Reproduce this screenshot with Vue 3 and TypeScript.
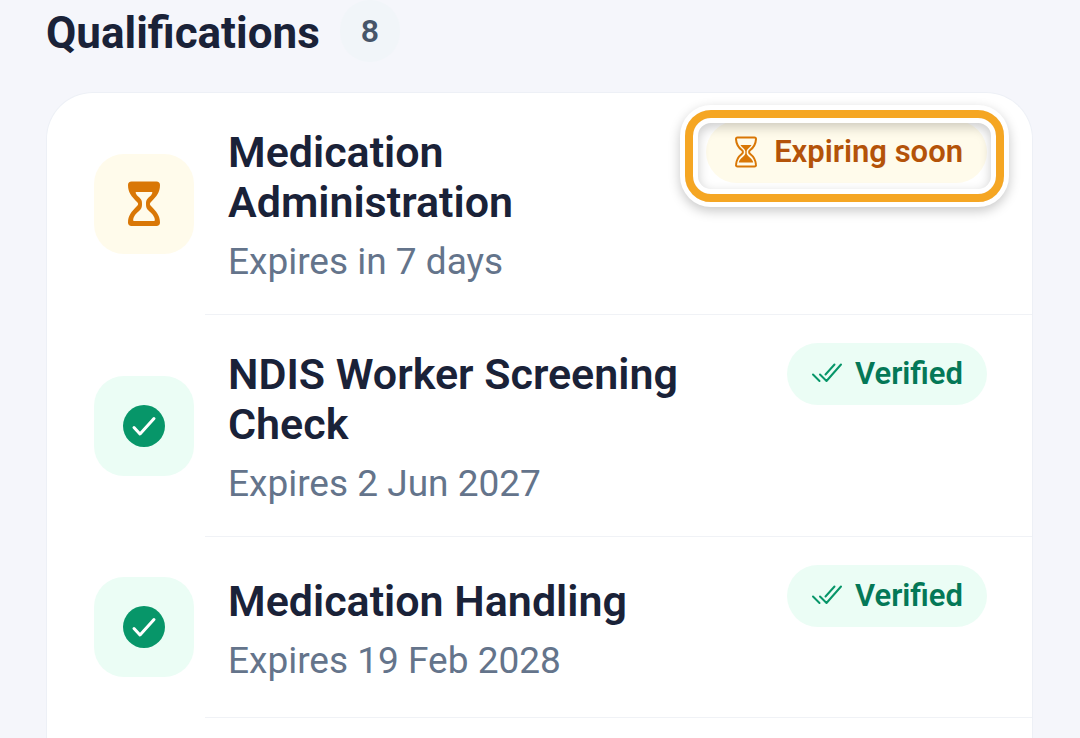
<script setup lang="ts">
type Status = 'expiring' | 'verified'

interface Qualification {
  name: string
  expiry: string
  status: Status
  highlighted?: boolean
}

const total = 8

const labels: Record<Status, string> = {
  expiring: 'Expiring soon',
  verified: 'Verified',
}

const qualifications: Qualification[] = [
  { name: 'Medication Administration', expiry: 'Expires in 7 days', status: 'expiring', highlighted: true },
  { name: 'NDIS Worker Screening Check', expiry: 'Expires 2 Jun 2027', status: 'verified' },
  { name: 'Medication Handling', expiry: 'Expires 19 Feb 2028', status: 'verified' },
]
</script>

<template>
  <main class="page">
    <header class="header">
      <h1 class="heading">Qualifications</h1>
      <span class="count">{{ total }}</span>
    </header>

    <ul class="card">
      <li v-for="item in qualifications" :key="item.name" class="item" :class="item.status">
        <div class="row">
          <div class="tile">
            <svg v-if="item.status === 'expiring'" class="tile-icon" viewBox="0 0 48 48" aria-hidden="true">
              <path
                d="M11.500 1.500h25c2.200 0 3.500 1.500 3.500 3.500 0 7.500-3.600 11.500-9 17-1.500 1.500-1.500 2.500 0 4 5.400 5.500 9 9.500 9 16.500 0 2-1.300 3.500-3.500 3.500h-25c-2.200 0-3.500-1.500-3.500-3.500 0-7 3.600-11 9-16.500 1.500-1.500 1.500-2.500 0-4C11.600 16.500 8 12.500 8 5c0-2 1.300-3.500 3.500-3.500Z"
                fill="currentColor"
              />
              <path
                d="M16.500 12h15c.8 0 1 .6.700 1.200-1.200 3-3.600 3.800-5.100 6.100-.9 1.300-1.100 2.500-1.100 4.700s.2 4 1.500 5.500c2 2.400 5.500 4.300 6.800 8 .8 2.500.8 3.600-.8 3.600h-19c-1.600 0-1.600-1.100-.8-3.600 1.300-3.700 4.800-5.600 6.800-8 1.300-1.500 1.500-3.300 1.500-5.500s-.2-3.400-1.100-4.700c-1.500-2.300-3.900-3.100-5.100-6.100-.3-.6-.1-1.200.7-1.200Z"
                fill="#fffbeb"
              />
            </svg>
            <svg v-else class="tile-icon" viewBox="0 0 48 48" aria-hidden="true">
              <circle cx="24" cy="24" r="21" fill="currentColor" />
              <path
                d="M14 25.500l6 6.500L34 16.500"
                fill="none"
                stroke="#fff"
                stroke-width="3"
                stroke-linecap="round"
                stroke-linejoin="round"
              />
            </svg>
          </div>

          <div class="text">
            <h2 class="name">{{ item.name }}</h2>
            <p class="expiry">{{ item.expiry }}</p>
          </div>

          <div class="status">
            <span class="pill">
              <svg v-if="item.status === 'expiring'" class="pill-icon narrow" viewBox="0 0 24 32" aria-hidden="true">
                <path
                  d="M3.500 1.500h17c1 0 1.600.7 1.500 1.600-.3 5.400-2.300 8.300-6 11.200-1.200.9-1.200 2.500 0 3.400 3.700 2.900 5.700 5.800 6 11.200.1.900-.5 1.600-1.500 1.600h-17c-1 0-1.600-.7-1.500-1.600.3-5.400 2.300-8.300 6-11.200 1.200-.9 1.200-2.500 0-3.400-3.700-2.900-5.700-5.800-6-11.200-.1-.9.500-1.600 1.500-1.600Z"
                  fill="none"
                  stroke="currentColor"
                  stroke-width="2"
                />
                <path
                  d="M6.500 9h11c-.8 2-4.500 3.700-4.800 6.200v2.200c.3 3 5.800 4.600 6.500 9.100H4.800c.7-4.500 6.200-6.100 6.500-9.100v-2.200C11 12.700 7.300 11 6.500 9Z"
                  fill="currentColor"
                />
              </svg>
              <svg v-else class="pill-icon" viewBox="0 0 32 32" aria-hidden="true">
                <path
                  d="M2 16.500l6.500 6.500M9 16.500l6.500 6.500L30 6.500M14.500 16.500L23.500 6.500"
                  fill="none"
                  stroke="currentColor"
                  stroke-width="2"
                  stroke-linecap="round"
                  stroke-linejoin="round"
                />
              </svg>
              {{ labels[item.status] }}
            </span>
            <span v-if="item.highlighted" class="focus-frame" aria-hidden="true"></span>
          </div>
        </div>
      </li>
    </ul>
  </main>
</template>

<style>
html,
body {
  margin: 0;
  background: #f5f6fb;
}
</style>

<style scoped>
.page {
  display: flex;
  flex-direction: column;
  min-height: 100vh;
  box-sizing: border-box;
  padding: 0 47px 0 46px;
  background: #f5f6fb;
  font-family: Roboto, "Liberation Sans", sans-serif;
  color: #1a2238;
}

.header {
  display: flex;
  align-items: center;
  gap: 20px;
  margin-bottom: 30px;
}

.heading {
  margin: 0;
  padding-top: 4px;
  font-size: 44px;
  line-height: 52px;
  font-weight: 700;
}

.count {
  min-width: 60px;
  border-radius: 31px;
  background: #f1f5f9;
  color: #475569;
  font-size: 32px;
  line-height: 62px;
  font-weight: 600;
  text-align: center;
}

.card {
  flex: 1;
  margin: 0;
  padding: 0;
  list-style: none;
  border: 1px solid #edf0f6;
  border-bottom: 0;
  border-radius: 47px 47px 0 0;
  background: #fff;
}

.item::after {
  content: "";
  display: block;
  height: 1px;
  margin-left: 158px;
  background: #f0f2f6;
}

.row {
  display: flex;
  align-items: center;
  padding: 28px 45px 28px 47px;
}

.tile {
  display: flex;
  flex: none;
  align-items: center;
  justify-content: center;
  width: 100px;
  height: 100px;
  margin: 12px 34px 12px 0;
  border-radius: 30px;
}

.tile-icon {
  width: 48px;
  height: 48px;
}

.text {
  flex: 1;
  min-width: 0;
  padding: 6px 0 2px;
}

.name {
  margin: 0;
  font-size: 43px;
  line-height: 50px;
  font-weight: 600;
}

.expiry {
  margin: 13px 0 0;
  color: #64748b;
  font-size: 37px;
  line-height: 44px;
}

.status {
  position: relative;
  flex: none;
  align-self: flex-start;
  margin-left: 24px;
}

.pill {
  display: flex;
  align-items: center;
  gap: 12px;
  padding: 0 24px;
  border-radius: 31px;
  font-size: 31px;
  line-height: 62px;
  font-weight: 600;
}

.pill-icon {
  width: 32px;
  height: 32px;
}

.pill-icon.narrow {
  width: 24px;
  margin: 0 4px;
}

.expiring .tile,
.expiring .pill {
  background: #fffbeb;
}

.expiring .tile,
.expiring .pill-icon {
  color: #d97706;
}

.expiring .pill {
  color: #b45309;
}

.verified .tile,
.verified .pill {
  background: #ebfdf5;
}

.verified .tile,
.verified .pill-icon {
  color: #079669;
}

.verified .pill {
  color: #047857;
}

.focus-frame {
  position: absolute;
  inset: -11px -17px -19px -21px;
  border: 8px solid #f5a623;
  border-radius: 26px;
  box-shadow:
    0 0 0 5px #fff,
    0 4px 12px 5px rgba(0, 0, 0, 0.22),
    inset 0 0 0 5px #fff,
    inset 0 4px 12px 5px rgba(0, 0, 0, 0.2);
}
</style>
